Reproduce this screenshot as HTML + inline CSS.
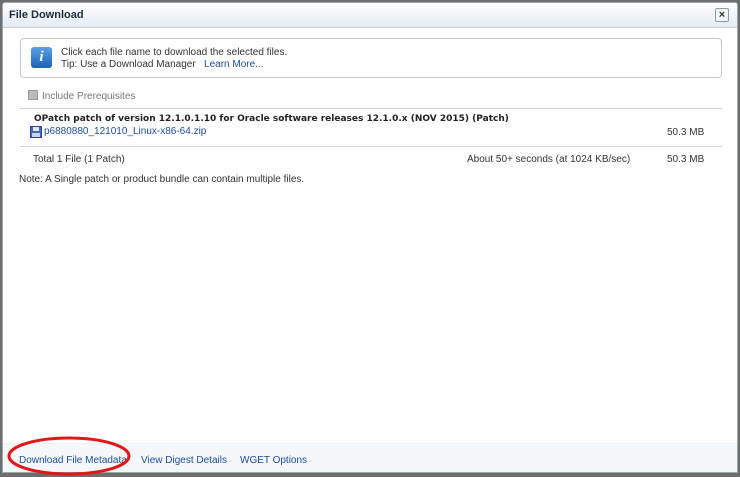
<!DOCTYPE html>
<html><head><meta charset="utf-8"><style>
*{margin:0;padding:0;box-sizing:border-box}
body{width:740px;height:475px;overflow:hidden;background:#6e6e6e;font-family:"Liberation Sans",Tahoma,sans-serif;font-size:10px;color:#222;position:relative}
.win{position:absolute;left:2px;top:2px;width:736px;height:471px;background:#fff;border:1px solid #9aa;border-radius:3px 3px 0 0;overflow:hidden}
.title{height:25px;background:linear-gradient(#fff,#e4ebf2);border-bottom:1px solid #c9d3dc;font-weight:bold;font-size:11px;padding:6px 6px;color:#1c2b3a}
.close{position:absolute;right:8px;top:5px;width:14px;height:14px;border:1px solid #8c9bab;border-radius:2px;background:#f4f6f8;font-size:11px;line-height:12px;text-align:center;font-weight:bold;color:#333}
.info{position:absolute;left:17px;top:35px;width:702px;height:40px;border:1px solid #c4c9ce;border-radius:4px;background:#fff}
.icon{position:absolute;left:10px;top:8px;width:21px;height:21px;border-radius:3px;background:linear-gradient(#5aa0e6,#1c62b8);color:#fff;font:italic bold 15px "Liberation Serif",serif;text-align:center;line-height:21px}
.info .t{position:absolute;left:40px;top:8px;line-height:12px;color:#333}
a{color:#1d4d9a;text-decoration:none}
.chk{position:absolute;left:25px;top:87px;color:#777}
.chk span{display:inline-block;width:10px;height:10px;background:#bbb;border:1px solid #999;vertical-align:-1px;margin-right:4px}
.hr{position:absolute;left:17px;width:702px;height:1px;background:#cdd2d6}
.abs{position:absolute}
.foot{position:absolute;left:0;top:440px;width:736px;height:31px;background:#f5f8fb;border-top:1px solid #eef1f4}
.foot a{position:absolute;top:11px}
</style></head><body>
<div class="win">
<div class="title">File Download</div>
<div class="close">×</div>
<div class="info"><div class="icon">i</div><div class="t">Click each file name to download the selected files.<br>Tip: Use a Download Manager &nbsp;&nbsp;<a>Learn More...</a></div></div>
<div class="chk"><span></span>Include Prerequisites</div>
<div class="hr" style="top:105px"></div>
<div class="abs" style="left:31px;top:111px;font-weight:bold;font-family:'DejaVu Sans',sans-serif;font-size:9px;color:#222">OPatch patch of version 12.1.0.1.10 for Oracle software releases 12.1.0.x (NOV 2015) (Patch)</div>
<svg class="abs" style="left:27px;top:123px" width="12" height="12"><rect x="0.5" y="0.5" width="11" height="11" fill="#4a69b8" stroke="#2b4690"/><rect x="3" y="1" width="6" height="4" fill="#dfe7f5"/><rect x="2" y="7" width="8" height="4" fill="#c7d3ea"/></svg>
<div class="abs" style="left:41px;top:123px"><a>p6880880_121010_Linux-x86-64.zip</a></div>
<div class="abs" style="left:664px;top:124px;color:#333">50.3 MB</div>
<div class="hr" style="top:143px"></div>
<div class="abs" style="left:30px;top:151px;color:#333">Total 1 File (1 Patch)</div>
<div class="abs" style="left:464px;top:151px;color:#333">About 50+ seconds (at 1024 KB/sec)</div>
<div class="abs" style="left:664px;top:151px;color:#333">50.3 MB</div>
<div class="abs" style="left:16px;top:171px;color:#333">Note: A Single patch or product bundle can contain multiple files.</div>
<div class="foot"><a style="left:16px">Download File Metadata</a><a style="left:138px">View Digest Details</a><a style="left:237px">WGET Options</a></div>
</div>
<svg class="abs" style="left:6px;top:433px" width="126" height="44"><ellipse cx="63" cy="23" rx="60" ry="18" fill="none" stroke="#e01818" stroke-width="3"/></svg>
</body></html>
